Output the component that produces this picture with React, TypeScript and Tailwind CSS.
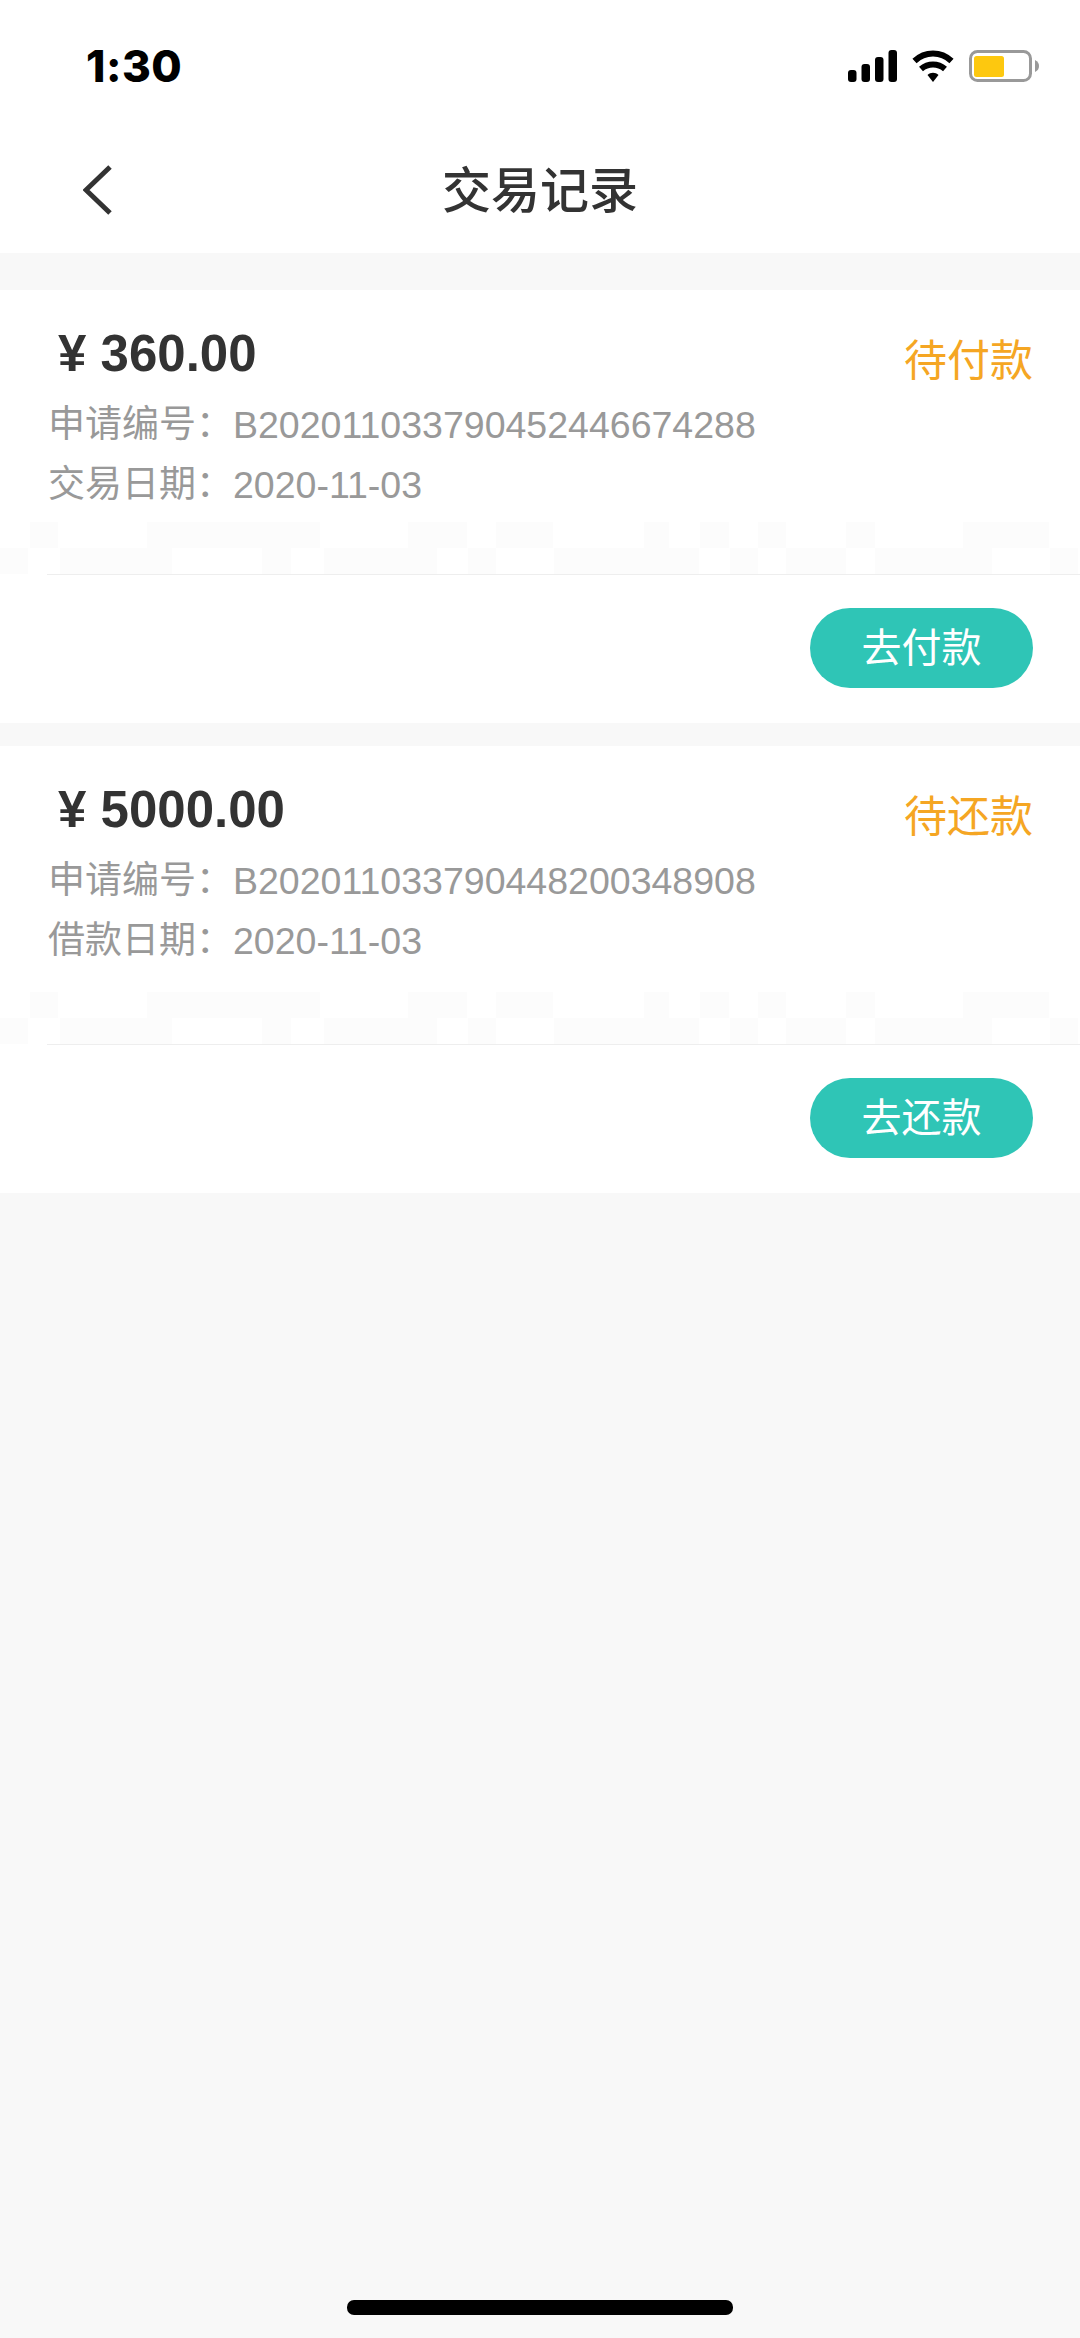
const CJK = "font-['Liberation_Sans','Noto_Sans_CJK_SC',sans-serif]";

// faint jpeg-ish blotches above the divider: [start, end] in page px
const UPPER = [[30, 58], [147, 320], [408, 467], [496, 553], [644, 669], [700, 729], [758, 786], [846, 875], [963, 1049]];
const LOWER = [[0, 28], [60, 172], [262, 291], [324, 437], [468, 496], [554, 699], [730, 758], [786, 846], [875, 992], [1050, 1078]];

const Blotches = ({ spans }: { spans: number[][] }) => (
  <div className="relative h-[26px]">
    {spans.map(([start, end]) => (
      <div
        key={start}
        className="absolute top-0 h-full bg-[#fcfcfc]"
        style={{ left: start, width: end - start }}
      />
    ))}
  </div>
);

const StatusBar = () => (
  <div className="flex h-[127px] items-start justify-between pl-[86px] pr-[41px] pt-[50px]">
    <span className="font-['Inter',sans-serif] text-[44px] font-extrabold leading-[32px] tracking-[0.5px] text-black">1:30</span>
    <div className="flex items-start gap-[15px]">
      <svg width="49" height="32" viewBox="0 0 49 32" fill="#000">
        <rect x="0" y="20" width="8.5" height="12" rx="3" />
        <rect x="13.5" y="14" width="8.5" height="18" rx="3" />
        <rect x="27" y="7" width="8.5" height="25" rx="3" />
        <rect x="40.5" y="0" width="8.5" height="32" rx="3" />
      </svg>
      <svg width="42" height="32" viewBox="0 0 42 32" fill="none" stroke="#000" strokeWidth="6">
        <path d="M2.5 11C13 1 29 1 39.5 11" />
        <path d="M9 19C16 13 26 13 33 19" />
        <path d="M15.5 25C18.5 22 23.5 22 26.5 25L21 32Z" fill="#000" stroke="none" />
      </svg>
      <svg width="70" height="32" viewBox="0 0 70 32">
        <rect x="1.5" y="1.5" width="60" height="29" rx="7" fill="#fff" stroke="#999" strokeWidth="3" />
        <rect x="5" y="6" width="30" height="21" rx="2.5" fill="#fdc80f" />
        <path d="M66 10C69 11.5 70 13.5 70 16C70 18.5 69 20.5 66 22Z" fill="#999" />
      </svg>
    </div>
  </div>
);

const NavBar = () => (
  <div className="relative flex h-[126px] items-center justify-center pt-[2px]">
    <svg className="absolute left-[83px] top-[38px]" width="29" height="50" viewBox="0 0 29 50" fill="none" stroke="#333" strokeWidth="5">
      <path d="M27 2L3 25L27 48" />
    </svg>
    <h1 className={`${CJK} text-[49px] font-medium leading-none text-[#333]`}>交易记录</h1>
  </div>
);

type RecordCardProps = {
  amount: string;
  status: string;
  serial: string;
  dateLabel: string;
  date: string;
  action: string;
  spacer: string;
};

const RecordCard = ({ amount, status, serial, dateLabel, date, action, spacer }: RecordCardProps) => (
  <div className={`${CJK} bg-white pt-[33px]`}>
    <div className="flex h-[60px] items-start justify-between pl-[58px] pr-[47px]">
      <div className="mt-[1px] h-[60px] text-[51px] font-bold leading-[60px] text-[#333]">¥ {amount}</div>
      <div className="mt-[8px] h-[60px] text-[43px] leading-[60px] text-[#f5a623]">{status}</div>
    </div>
    <div className="mt-[12px] px-[48px] text-[37px] leading-[60px] text-[#999]">
      <div className="flex h-[60px]">
        <span className="w-[185px] shrink-0 whitespace-nowrap">申请编号：</span>
        <span className="text-[37.5px]">{serial}</span>
      </div>
      <div className="flex h-[60px]">
        <span className="w-[185px] shrink-0 whitespace-nowrap">{dateLabel}：</span>
        <span className="text-[37.5px]">{date}</span>
      </div>
    </div>
    <div className={`flex flex-col justify-end ${spacer}`}>
      <Blotches spans={UPPER} />
      <Blotches spans={LOWER} />
    </div>
    <div className="ml-[47px] border-t border-[#eeeeee] pb-[35px] pr-[47px] pt-[33px]">
      <div className="flex justify-end">
        <button className="flex h-[80px] w-[223px] items-center justify-center rounded-[40px] bg-[#2fc5b6] text-[40px] leading-none text-white">
          {action}
        </button>
      </div>
    </div>
  </div>
);

export default function App() {
  return (
    <div className="flex h-[2338px] w-[1080px] flex-col overflow-hidden bg-[#f8f8f8]">
      <div className="bg-white">
        <StatusBar />
        <NavBar />
      </div>
      <div className="mt-[37px] flex flex-col gap-[23px]">
        <RecordCard
          amount="360.00"
          status="待付款"
          serial="B202011033790452446674288"
          dateLabel="交易日期"
          date="2020-11-03"
          action="去付款"
          spacer="h-[59px]"
        />
        <RecordCard
          amount="5000.00"
          status="待还款"
          serial="B202011033790448200348908"
          dateLabel="借款日期"
          date="2020-11-03"
          action="去还款"
          spacer="h-[73px]"
        />
      </div>
      <div className="mt-auto flex justify-center pb-[23px]">
        <div className="h-[15px] w-[386px] rounded-[7px] bg-black" />
      </div>
    </div>
  );
}
